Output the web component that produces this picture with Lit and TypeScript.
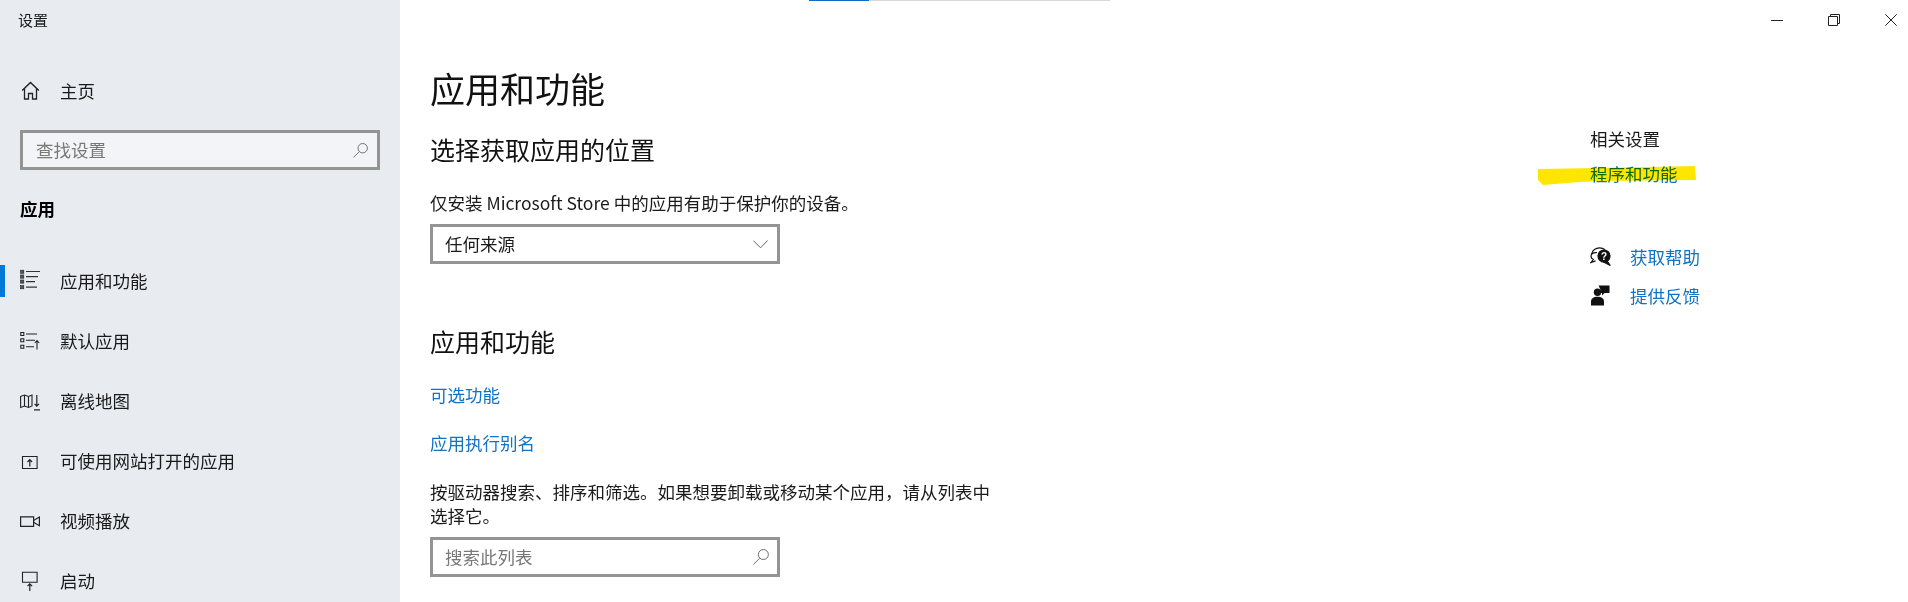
import { LitElement, html, css, svg } from "lit";
import { customElement } from "lit/decorators.js";

const stroke = (content: unknown) => html`<svg class="ico line" width="20" height="20" viewBox="0 0 20 20" fill="none" stroke="#222" stroke-width="1.1">${content}</svg>`;

const sq = (y: number) => svg`<rect x="0.6" y=${y} width="3.2" height="3.2" fill="#555" stroke="#222" stroke-width=".6"/>`;

const icons = {
  home: svg`<path d="M2.200 9.500 10.500 1.500l8.300 8" stroke-width="1.500"/><path d="M4.500 7.800V18h4v-5.500h4V18h4V7.800" stroke-width="1.300"/>`,
  apps: svg`${sq(-.8)}${sq(4)}${sq(9)}${sq(14.600)}<path d="M6 .5h14M6 5.600h12M6 10.600h9M6 16.200h11" stroke="#333" stroke-width="1.200"/>`,
  defaults: svg`<path d="M.8 1.500h3v3h-3zM.8 7.800h3v3h-3zM.8 14.200h3v3h-3z"/><path d="M6 3h11M6 9.300h9M6 15.800h8"/><path d="M17 18.500v-9M14.800 12l2.200-2.500 2.200 2.500"/>`,
  maps: svg`<path d="M.6 5.500 4.500 4l4 1.500L12 4v11l-3.500 1.500-4-1.500-3.900 1.500z"/><path d="M4.500 4v11M8.500 5.500v11"/><path d="M16.800 4v11M14.600 12.800l2.200 2.400 2.200-2.400M14 18.800h6" stroke-width="1.200"/>`,
  web: svg`<path d="M2.500 5.500h14.600v12H2.500z"/><path d="M9.800 15.500V9M7.500 11l2.300-2.300 2.300 2.300" stroke-width="1.200"/>`,
  video: svg`<path d="M.6 5.800h13v9.500H.6z" stroke-width="1.200"/><path d="m13.600 9.500 5.800-3.500v8.800l-5.800-3.500" stroke-width="1.200"/>`,
  startup: svg`<path d="M2.500 1.200h14.600v10H2.500z"/><path d="M9.800 20v-7M7.500 15.200l2.300-2.400 2.300 2.400" stroke-width="1.200"/>`,
};

const search = (size: number) => html`<svg class="ico" width=${size} height=${size} viewBox="0 0 15 15" fill="none" stroke="#666" stroke-width=".9"><circle cx="9.700" cy="5.200" r="4.700"/><path d="m6.300 8.600-5.900 5.900"/></svg>`;

const nav: [string, unknown, boolean][] = [
  ["应用和功能", icons.apps, true],
  ["默认应用", icons.defaults, false],
  ["离线地图", icons.maps, false],
  ["可使用网站打开的应用", icons.web, false],
  ["视频播放", icons.video, false],
  ["启动", icons.startup, false],
];

@customElement("app-root")
export class AppRoot extends LitElement {
  static styles = css`
    :host {
      display: grid;
      grid-template-columns: 400px 1fr;
      width: 1908px;
      height: 602px;
      overflow: hidden;
      background: #fff;
      color: #1a1a1a;
      font-family: "Noto Sans CJK SC", "Noto Sans", sans-serif;
      font-size: 17.5px;
      line-height: 24px;
    }
    .ico { display: block; flex: none; }
    .line { overflow: visible; }
    .side {
      background: #e8ecf0;
      display: flex;
      flex-direction: column;
      overflow: hidden;
    }
    .side > * { flex: none; }
    .app-title { height: 40px; padding-left: 18px; font-size: 15px; line-height: 40px; }
    .row { display: flex; align-items: center; gap: 20px; padding-left: 20px; position: relative; }
    .home { height: 40px; margin-top: 31px; }
    .box {
      box-sizing: border-box;
      height: 40px;
      border: 3px solid #949494;
      display: flex;
      align-items: center;
      justify-content: space-between;
    }
    .find { margin: 19px 20px 0; background: #f2f4f7; padding: 0 9px 0 13px; color: #787878; }
    .section { margin: 19px 0 0 20px; height: 40px; line-height: 40px; font-weight: 700; color: #000; }
    .items { margin-top: 22px; }
    .item { height: 60px; }
    .item.on::before {
      content: "";
      position: absolute;
      left: 0;
      top: 14px;
      width: 5px;
      height: 32px;
      background: #0078d7;
    }
    .main { display: flex; flex-direction: column; position: relative; }
    .progress {
      position: absolute;
      left: 409px;
      top: 0;
      width: 301px;
      height: 1px;
      background: linear-gradient(90deg, #0a6fc2 60px, #d8d8d8 60px);
    }
    .top { height: 40px; display: flex; justify-content: flex-end; gap: 23px; }
    .ctl { width: 34px; height: 40px; display: flex; align-items: center; justify-content: center; }
    .body { display: grid; grid-template-columns: 1190px 1fr; }
    .content { padding-left: 30px; }
    h1, h2, p { margin: 0; font-weight: 400; }
    h1 { margin-top: 23px; font-size: 35px; line-height: 50px; color: #111; }
    h2 { font-size: 25px; line-height: 34px; color: #111; }
    .h-a { margin-top: 19px; }
    .h-b { margin-top: 60px; }
    .desc { margin-top: 25px; }
    .drop, .filter { width: 350px; background: #fff; }
    .drop { margin-top: 9px; padding: 0 9px 0 12px; }
    .link { display: block; color: #1272c4; }
    .l-a { margin-top: 25px; }
    .l-b { margin-top: 24px; }
    .para { margin-top: 25px; width: 570px; }
    .filter { margin-top: 9px; padding: 0 8px 0 12px; color: #787878; }
    .aside { display: flex; flex-direction: column; align-items: flex-start; }
    .aside-title { margin-top: 87px; }
    .marked { margin-top: 11px; position: relative; }
    .marker {
      position: absolute;
      left: -52px;
      top: 1px;
      width: 158px;
      height: 23px;
      mix-blend-mode: multiply;
    }
    .help { display: flex; align-items: center; gap: 18px; }
    .help .link { white-space: nowrap; }
    .h1st { margin-top: 59px; }
    .h2nd { margin-top: 15px; }
  `;

  render() {
    return html`
      <aside class="side">
        <div class="app-title">设置</div>
        <div class="row home">${stroke(icons.home)}<span>主页</span></div>
        <div class="box find"><span>查找设置</span>${search(15)}</div>
        <div class="section">应用</div>
        <div class="items">
          ${nav.map(([label, icon, on]) => html`<div class="row item ${on ? "on" : ""}">${stroke(icon)}<span>${label}</span></div>`)}
        </div>
      </aside>
      <main class="main">
        <div class="progress"></div>
        <div class="top">
          <div class="ctl"><svg width="12" height="12" viewBox="0 0 12 12" stroke="#222" fill="none"><path d="M0 6.500h12"/></svg></div>
          <div class="ctl"><svg width="12" height="12" viewBox="0 0 12 12" stroke="#222" fill="none"><path d="M.5 2.500h9v9h-9z"/><path d="M2.500 2.500v-2h9v9h-2"/></svg></div>
          <div class="ctl"><svg width="12" height="12" viewBox="0 0 12 12" stroke="#222" fill="none"><path d="m.3.300 11.400 11.400M11.700.300.300 11.700"/></svg></div>
        </div>
        <div class="body">
          <section class="content">
            <h1>应用和功能</h1>
            <h2 class="h-a">选择获取应用的位置</h2>
            <p class="desc">仅安装 Microsoft Store 中的应用有助于保护你的设备。</p>
            <div class="box drop">
              <span>任何来源</span>
              <svg class="ico" width="15" height="9" viewBox="0 0 15 9" fill="none" stroke="#555" stroke-width=".9"><path d="m.4.600 7.100 7.200L14.600.6"/></svg>
            </div>
            <h2 class="h-b">应用和功能</h2>
            <a class="link l-a">可选功能</a>
            <a class="link l-b">应用执行别名</a>
            <p class="para">按驱动器搜索、排序和筛选。如果想要卸载或移动某个应用，请从列表中选择它。</p>
            <div class="box filter"><span>搜索此列表</span>${search(16)}</div>
          </section>
          <section class="aside">
            <div class="aside-title">相关设置</div>
            <div class="marked">
              <a class="link">程序和功能</a>
              <svg class="marker" viewBox="0 0 158 23" preserveAspectRatio="none"><path d="M0 6 60 5 157 3 158 17 60 18 42 19 5 22 0 17z" fill="#ffe600"/></svg>
            </div>
            <div class="help h1st">
              <svg class="ico" width="22" height="20" viewBox="0 0 22 20" fill="none" stroke="#111" stroke-width="1.200"><path d="M7 5.500C5 5.800 2.500 5 1.500 7.500c-1 2 0 4 1.800 5L1 15.500l4.500-1.600"/><path d="M1.500 7.500C2 3 6 .8 9.500.8c2.400 0 4 .7 5.500 2"/><circle cx="14" cy="9" r="6" fill="#111"/><path d="m16.500 13 3.800 5.500-6.800-3.500z" fill="#111"/><text x="14" y="12.600" text-anchor="middle" font-size="10" font-weight="700" fill="#fff" stroke="none" font-family="Liberation Sans">?</text></svg>
              <a class="link">获取帮助</a>
            </div>
            <div class="help h2nd">
              <svg class="ico" width="22" height="22" viewBox="0 0 22 22" fill="#111"><circle cx="7.500" cy="7.200" r="3.700"/><path d="M1 20.500v-4c0-3 2.500-4.800 6.500-4.800s6.500 1.800 6.500 4.800v4z"/><path d="M8.500.5H19.500v7.500h-5l-2.500 2.500V8h-1c0-2.200-.8-4.500-2.500-7.500z"/></svg>
              <a class="link">提供反馈</a>
            </div>
          </section>
        </div>
      </main>
    `;
  }
}
